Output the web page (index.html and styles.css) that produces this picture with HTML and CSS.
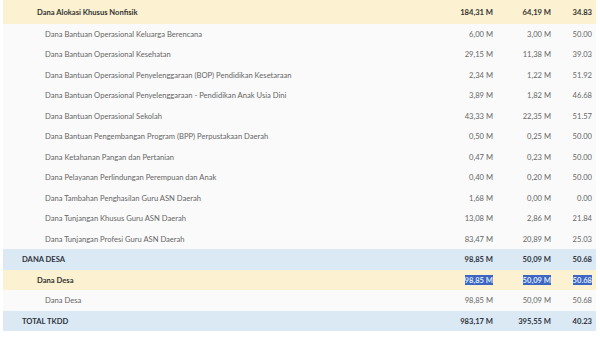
FILE: index.html
```html
<!DOCTYPE html>
<html>
<head>
<meta charset="utf-8">
<link rel="stylesheet" href="styles.css">
</head>
<body>
<div class="table">
  <div class="row grp first"><div class="name">Dana Alokasi Khusus Nonfisik</div><div class="num">184,31 M</div><div class="num">64,19 M</div><div class="num">34.83</div></div>
  <div class="row item"><div class="name">Dana Bantuan Operasional Keluarga Berencana</div><div class="num">6,00 M</div><div class="num">3,00 M</div><div class="num">50.00</div></div>
  <div class="row item"><div class="name">Dana Bantuan Operasional Kesehatan</div><div class="num">29,15 M</div><div class="num">11,38 M</div><div class="num">39.03</div></div>
  <div class="row item"><div class="name">Dana Bantuan Operasional Penyelenggaraan (BOP) Pendidikan Kesetaraan</div><div class="num">2,34 M</div><div class="num">1,22 M</div><div class="num">51.92</div></div>
  <div class="row item"><div class="name">Dana Bantuan Operasional Penyelenggaraan - Pendidikan Anak Usia Dini</div><div class="num">3,89 M</div><div class="num">1,82 M</div><div class="num">46.68</div></div>
  <div class="row item"><div class="name">Dana Bantuan Operasional Sekolah</div><div class="num">43,33 M</div><div class="num">22,35 M</div><div class="num">51.57</div></div>
  <div class="row item"><div class="name">Dana Bantuan Pengembangan Program (BPP) Perpustakaan Daerah</div><div class="num">0,50 M</div><div class="num">0,25 M</div><div class="num">50.00</div></div>
  <div class="row item"><div class="name">Dana Ketahanan Pangan dan Pertanian</div><div class="num">0,47 M</div><div class="num">0,23 M</div><div class="num">50.00</div></div>
  <div class="row item"><div class="name">Dana Pelayanan Perlindungan Perempuan dan Anak</div><div class="num">0,40 M</div><div class="num">0,20 M</div><div class="num">50.00</div></div>
  <div class="row item"><div class="name">Dana Tambahan Penghasilan Guru ASN Daerah</div><div class="num">1,68 M</div><div class="num">0,00 M</div><div class="num">0.00</div></div>
  <div class="row item"><div class="name">Dana Tunjangan Khusus Guru ASN Daerah</div><div class="num">13,08 M</div><div class="num">2,86 M</div><div class="num">21.84</div></div>
  <div class="row item"><div class="name">Dana Tunjangan Profesi Guru ASN Daerah</div><div class="num">83,47 M</div><div class="num">20,89 M</div><div class="num">25.03</div></div>
  <div class="row sec"><div class="name">DANA DESA</div><div class="num">98,85 M</div><div class="num">50,09 M</div><div class="num">50.68</div></div>
  <div class="row grp"><div class="name">Dana Desa</div><div class="num"><span class="sel">98,85 M</span></div><div class="num"><span class="sel">50,09 M</span></div><div class="num"><span class="sel">50.68</span></div></div>
  <div class="row item"><div class="name">Dana Desa</div><div class="num">98,85 M</div><div class="num">50,09 M</div><div class="num">50.68</div></div>
  <div class="row sec"><div class="name">TOTAL TKDD</div><div class="num">983,17 M</div><div class="num">395,55 M</div><div class="num">40.23</div></div>
</div>
</body>
</html>
```

FILE: styles.css
```css
html, body {
  margin: 0;
  padding: 0;
  background: #ffffff;
}
body {
  font-family: Lato, "Noto Sans", sans-serif;
  font-size: 7.6px;
  color: #666666;
}
.table {
  margin: 0 4px 0 3px;
  display: flex;
  flex-direction: column;
}
.row {
  display: grid;
  grid-template-columns: 1fr 80px 58px 41px;
  align-items: center;
  height: 20.5px;
  padding-right: 4px;
  background: #fafafa;
}
.row.first {
  height: 23.5px;
}
.name {
  white-space: nowrap;
}
.num {
  text-align: right;
  white-space: nowrap;
}
.item .name {
  padding-left: 42px;
}
.grp {
  background: #fcf1d0;
  font-weight: 700;
  color: #333333;
}
.grp .name {
  padding-left: 34px;
}
.sec {
  background: #dbe9f5;
  font-weight: 700;
  color: #2f3540;
}
.sec .name {
  padding-left: 19px;
}
.sel {
  background: #3c66c2;
  color: #dfe8f8;
}
```
